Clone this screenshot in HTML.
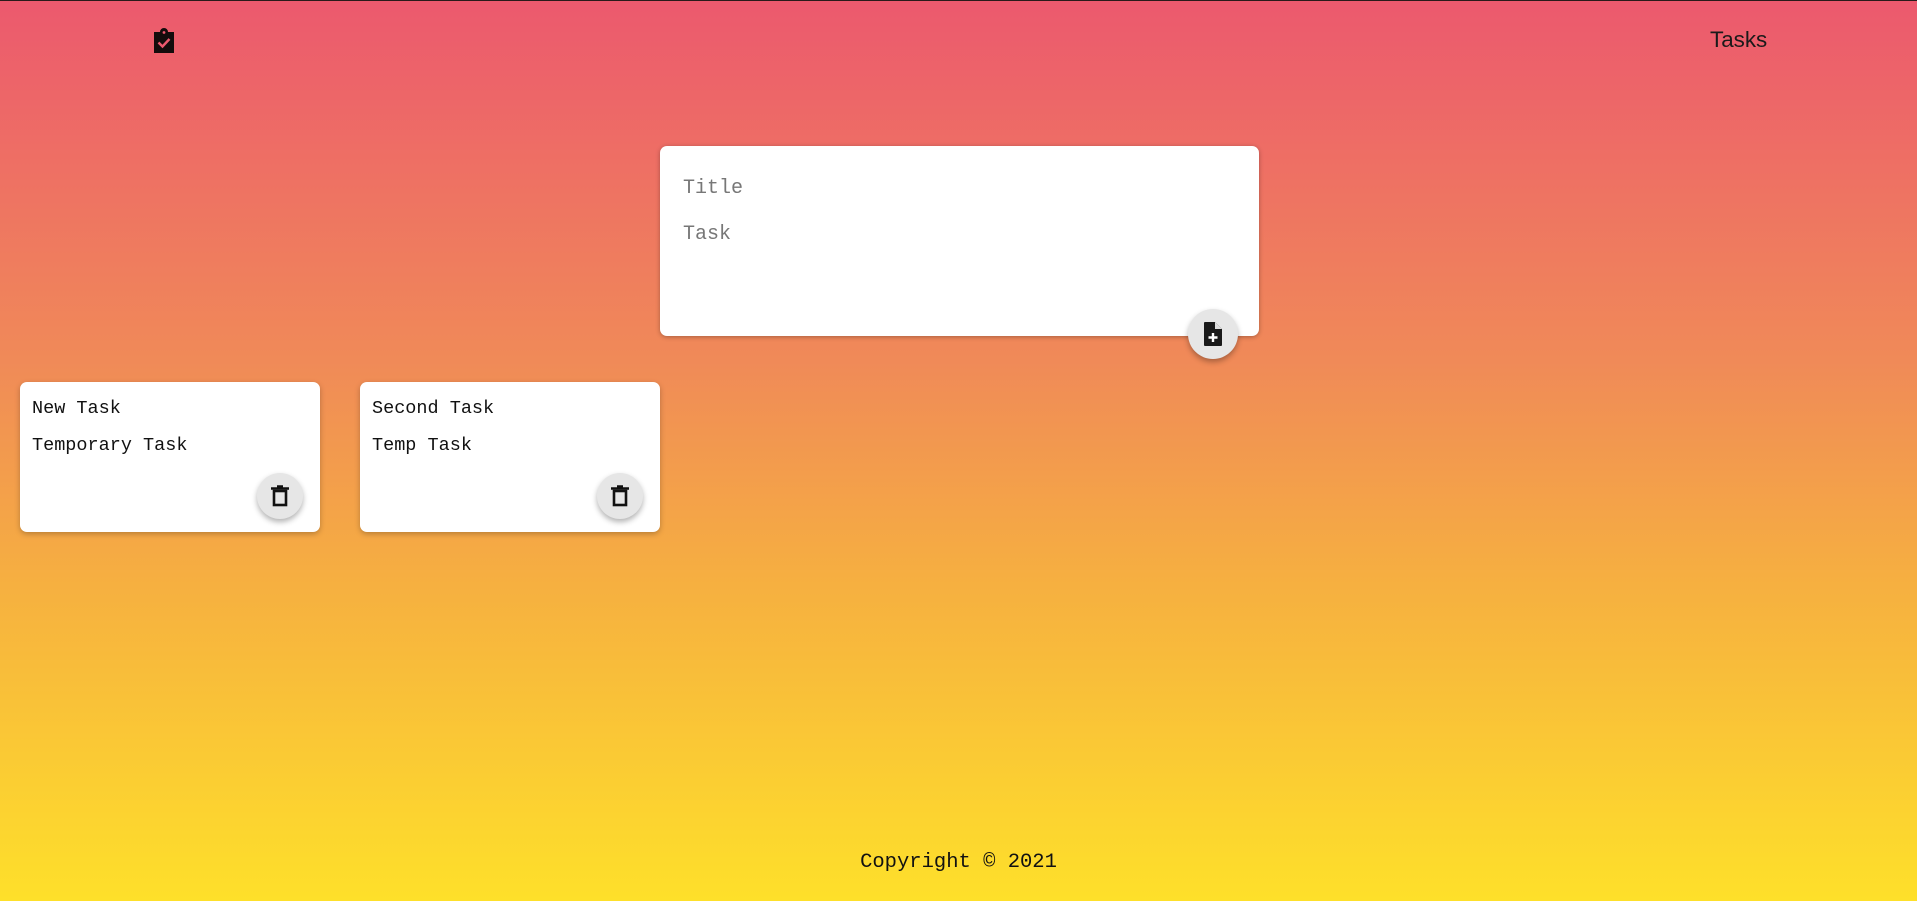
<!DOCTYPE html>
<html><head><meta charset="utf-8"><style>
*{margin:0;padding:0;box-sizing:border-box}
html,body{width:1917px;height:901px;overflow:hidden}
body{background:linear-gradient(to bottom,#ec596e 0%,#f08a58 40%,#f6b040 65%,#fee02a 100%);border-top:1px solid #2a1a1a;position:relative;font-family:"Liberation Mono",monospace}
.logo{position:absolute;left:152px;top:27px}
.nav{position:absolute;left:1710px;top:26px;font-family:"Liberation Sans",sans-serif;font-size:22.4px;color:#1a1a1a}
.input{position:absolute;left:660px;top:145px;width:599px;height:190px;background:#fff;border-radius:7px;box-shadow:0 1px 5px rgba(0,0,0,.3)}
.ph{position:absolute;left:23px;font-size:20px;color:#777}
.fab{position:absolute;border-radius:50%;background:#e6e6e6;box-shadow:0 3px 6px rgba(0,0,0,.3);display:flex;align-items:center;justify-content:center}
.card{position:absolute;top:381px;width:300px;height:150px;background:#fff;border-radius:7px;box-shadow:0 2px 6px rgba(0,0,0,.25)}
.t{position:absolute;left:12px;font-size:18.5px;color:#111}
.foot{position:absolute;left:0;width:1917px;top:850px;text-align:center;font-size:20.5px;color:#111}
</style></head><body>
<svg class="logo" width="24" height="26" viewBox="0 0 24 26"><path d="M2 4h6a4 4 0 0 1 8 0h6v21H2z" fill="#140c0c"/><circle cx="12" cy="4.5" r="1.4" fill="#ec596e"/><path d="M6.5 14.5l4 4 7-7.5" stroke="#ec596e" stroke-width="2.4" fill="none"/></svg>
<div class="nav">Tasks</div>
<div class="input">
<div class="ph" style="top:31px">Title</div>
<div class="ph" style="top:77px">Task</div>
<div class="fab" style="left:528px;top:163px;width:50px;height:50px"><svg width="20" height="24" viewBox="0 0 20 24"><path d="M2 0h10l7 7v16a1 1 0 0 1-1 1H2a1 1 0 0 1-1-1V1a1 1 0 0 1 1-1z" fill="#1a1a1a"/><path d="M12 0v7h7" fill="#ddd"/><path d="M10 11v9M5.5 15.5h9" stroke="#fff" stroke-width="2.4"/></svg></div>
</div>
<div class="card" style="left:20px"><div class="t" style="top:16px">New Task</div><div class="t" style="top:53px">Temporary Task</div>
<div class="fab" style="left:237px;top:91px;width:46px;height:46px"><svg width="20" height="22" viewBox="0 0 20 22"><path d="M1 3.5h18M7 1.5h6" stroke="#111" stroke-width="2.5"/><rect x="4" y="6" width="12" height="14" fill="none" stroke="#111" stroke-width="2.6"/></svg></div></div>
<div class="card" style="left:360px"><div class="t" style="top:16px">Second Task</div><div class="t" style="top:53px">Temp Task</div>
<div class="fab" style="left:237px;top:91px;width:46px;height:46px"><svg width="20" height="22" viewBox="0 0 20 22"><path d="M1 3.5h18M7 1.5h6" stroke="#111" stroke-width="2.5"/><rect x="4" y="6" width="12" height="14" fill="none" stroke="#111" stroke-width="2.6"/></svg></div></div>
<div class="foot">Copyright © 2021</div>
</body></html>
